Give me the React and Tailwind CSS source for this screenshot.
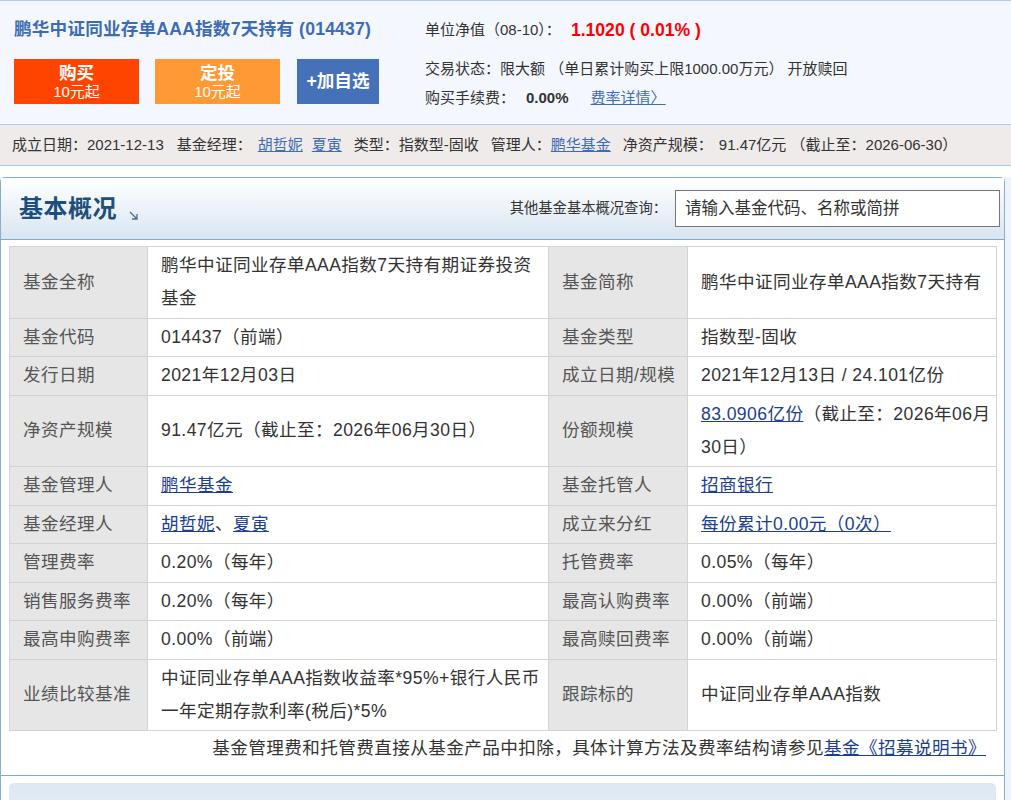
import React from "react";

const font = { fontFamily: '"Liberation Sans", Arial, "Noto Sans CJK SC", sans-serif' };

function A({ children, className = "" }) {
  return <a href="#" className={"underline text-[#1b3e8f] " + className}>{children}</a>;
}

const rows = [
  ["基金全称", "鹏华中证同业存单AAA指数7天持有期证券投资基金", "基金简称", "鹏华中证同业存单AAA指数7天持有"],
  ["基金代码", "014437（前端）", "基金类型", "指数型-固收"],
  ["发行日期", "2021年12月03日", "成立日期/规模", "2021年12月13日 / 24.101亿份"],
  ["净资产规模", "91.47亿元（截止至：2026年06月30日）", "份额规模", <><A>83.0906亿份</A>（截止至：2026年06月30日）</>],
  ["基金管理人", <A>鹏华基金</A>, "基金托管人", <A>招商银行</A>],
  ["基金经理人", <><A>胡哲妮</A>、<A>夏寅</A></>, "成立来分红", <A>每份累计0.00元（0次）</A>],
  ["管理费率", "0.20%（每年）", "托管费率", "0.05%（每年）"],
  ["销售服务费率", "0.20%（每年）", "最高认购费率", "0.00%（前端）"],
  ["最高申购费率", "0.00%（前端）", "最高赎回费率", "0.00%（前端）"],
  ["业绩比较基准", "中证同业存单AAA指数收益率*95%+银行人民币一年定期存款利率(税后)*5%", "跟踪标的", "中证同业存单AAA指数"],
];

export default function App() {
  const lab = "bg-[#e6e6e6] border border-[#d3d3d3] pl-[13px] pr-[4px] py-[2.25px] text-[#555] align-middle";
  const val2 = "bg-white border border-[#d3d3d3] pl-[13px] pr-[4px] py-[2.25px] text-[#333] align-middle";
  const val4 = "bg-white border border-[#d3d3d3] pl-[13px] pr-[2px] py-[2.25px] text-[#333] align-middle";

  return (
    <div className="w-[1011px] min-h-[800px] bg-[#eef4fa] overflow-hidden" style={font}>
      {/* 顶部 */}
      <div className="h-[124px] bg-[#f4f8fe] border-t border-[#a9cdee] flex">
        <div className="w-[411px] pl-[14px] pt-[16px]">
          <h1 className="text-[17.6px] leading-[24px] font-bold text-[#3e6cb3] whitespace-nowrap tracking-[0.2px]">
            鹏华中证同业存单AAA指数7天持有 (014437)
          </h1>
          <div className="flex mt-[18px]">
            <button className="w-[125px] h-[45px] bg-[#ff4400] text-white flex flex-col items-center justify-center">
              <span className="text-[17.6px] leading-[20px] font-bold">购买</span>
              <span className="text-[15px] leading-[17px]">10元起</span>
            </button>
            <button className="w-[125px] h-[45px] ml-[16px] bg-[#ff9933] text-white flex flex-col items-center justify-center">
              <span className="text-[17.6px] leading-[20px] font-bold">定投</span>
              <span className="text-[15px] leading-[17px]">10元起</span>
            </button>
            <button className="w-[82px] h-[45px] ml-[17px] bg-[#4571b9] text-white text-[17.6px] font-bold flex items-center justify-center">
              +加自选
            </button>
          </div>
        </div>
        <div className="pl-[14px] text-[15px] text-[#333]">
          <div className="mt-[17px] h-[24px] flex items-center whitespace-nowrap">
            <span>单位净值（08-10）：</span>
            <span className="ml-[10px] text-[17.6px] font-bold text-[#ff0000]">1.1020 ( 0.01% )</span>
          </div>
          <div className="mt-[15px] h-[24px] flex items-center whitespace-nowrap">
            交易状态：限大额 （单日累计购买上限1000.00万元） 开放赎回
          </div>
          <div className="mt-[5px] h-[24px] flex items-center whitespace-nowrap">
            <span>购买手续费：</span>
            <span className="ml-[11px] font-bold">0.00%</span>
            <a href="#" className="ml-[22px] text-[#3e6cb8] underline">费率详情〉</a>
          </div>
        </div>
      </div>

      {/* 信息条 */}
      <div className="h-[42px] bg-[#f0ebeb] border-y border-[#a9cdee] flex items-center pl-[12px] text-[15px] text-[#333] whitespace-nowrap">
        <span>成立日期：2021-12-13</span>
        <span className="ml-[13px]">基金经理：</span>
        <a href="#" className="ml-[6px] text-[#3e6cb8] underline">胡哲妮</a>
        <a href="#" className="ml-[9px] text-[#3e6cb8] underline">夏寅</a>
        <span className="ml-[12px]">类型：指数型-固收</span>
        <span className="ml-[12px]">管理人：</span>
        <a href="#" className="text-[#3e6cb8] underline">鹏华基金</a>
        <span className="ml-[12px]">净资产规模：</span>
        <span className="ml-[6px]">91.47亿元 （截止至：2026-06-30）</span>
      </div>

      <div className="h-[11px] bg-white" />

      {/* 基本概况 */}
      <div className="w-[1005px] bg-white border border-[#86afcd] rounded-t-[5px] border-b-0">
        <div className="h-[62px] bg-gradient-to-b from-white to-[#d9e5f2] flex items-center justify-between pl-[18px] pr-[4px] border-b border-[#7eaacb]">
          <div className="flex items-end">
            <span className="text-[24px] leading-[30px] font-bold text-[#1e4f7c] tracking-[0.5px]">基本概况</span>
            <svg width="9" height="9" viewBox="0 0 9 9" className="ml-[12px] mb-[4px]">
              <path d="M1 1 L8 8 M3 8 H8 V3" stroke="#4c6e90" strokeWidth="1.3" fill="none" />
            </svg>
          </div>
          <div className="flex items-center">
            <span className="text-[14.3px] text-[#333]">其他基金基本概况查询：</span>
            <div className="ml-[8px] w-[325px] h-[37px] border border-[#777] bg-white flex items-center pl-[9px] text-[16.5px] text-[#333]">
              请输入基金代码、名称或简拼
            </div>
          </div>
        </div>

        <div className="pl-[8px] pr-[6px] pt-[6px] border-b border-[#7eaacb]">
          <table className="table-fixed border-collapse w-[987px] text-[17.6px] leading-[33px] tracking-[0.4px]">
            <colgroup>
              <col className="w-[138px]" />
              <col className="w-[401px]" />
              <col className="w-[139px]" />
              <col className="w-[309px]" />
            </colgroup>
            <tbody>
              {rows.map((r, i) => (
                <tr key={i}>
                  <td className={lab}>{r[0]}</td>
                  <td className={val2}>{r[1]}</td>
                  <td className={lab}>{r[2]}</td>
                  <td className={val4}>{r[3]}</td>
                </tr>
              ))}
            </tbody>
          </table>
          <div className="text-right pr-[12px] text-[17.6px] leading-[33px] tracking-[0.4px] text-[#333] pt-[1px] pb-[10px]">
            基金管理费和托管费直接从基金产品中扣除，具体计算方法及费率结构请参见<A>基金《招募说明书》</A>
          </div>
        </div>

        <div className="pt-[7px] px-[8px] h-[40px]">
          <div className="h-[40px] rounded-t-[5px] bg-gradient-to-b from-[#dde8f3] to-[#e6eef7]" />
        </div>
      </div>
    </div>
  );
}
